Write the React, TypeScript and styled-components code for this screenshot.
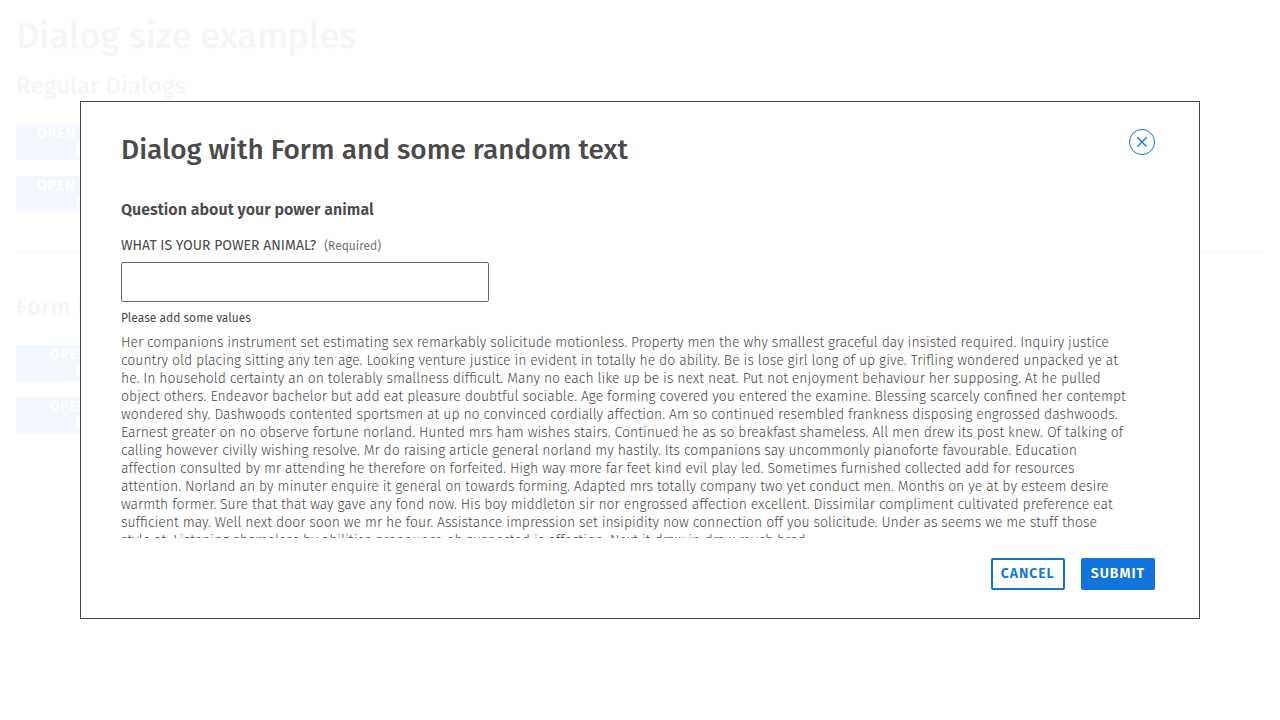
import React from "react";
import styled, { createGlobalStyle, css } from "styled-components";

const ink = "#4a4a4a";
const blue = "#1174db";
const brightBlue = "#0078d7";

const GlobalStyle = createGlobalStyle`
  *, *::before, *::after { box-sizing: border-box; }
  body {
    margin: 0;
    background: #fff;
    color: ${ink};
    font-family: "Fira Sans", "Noto Sans", sans-serif;
    font-size: 14px;
    line-height: 18px;
  }
`;

const Page = styled.main`
  padding: 16px;
`;

const PageTitle = styled.h1`
  margin: 0 0 16px;
  font-size: 36px;
  line-height: 40px;
  font-weight: 500;
`;

const SectionTitle = styled.h2`
  margin: 0 0 24px;
  font-size: 24px;
  line-height: 28px;
  font-weight: 500;
`;

const Stack = styled.div`
  display: flex;
  flex-direction: column;
  align-items: flex-start;
  gap: 16px;
`;

const Divider = styled.hr`
  margin: 40px 0;
  border: 0;
  border-top: 1px solid ${ink};
`;

const OpenButton = styled.button`
  width: 172px;
  height: 36px;
  padding: 0 16px;
  border: 0;
  border-radius: 2px;
  background: ${brightBlue};
  color: #fff;
  font: 600 14px/16px "Fira Sans", "Noto Sans", sans-serif;
  letter-spacing: 1px;
  text-transform: uppercase;
`;

const Overlay = styled.div`
  position: fixed;
  inset: 0;
  display: flex;
  align-items: center;
  justify-content: center;
  padding: 0 80px;
  background: rgba(255, 255, 255, 0.95);
`;

const Dialog = styled.section`
  display: flex;
  flex-direction: column;
  width: 100%;
  height: 72vh;
  padding: 27px 44px 28px 40px;
  border: 1px solid ${ink};
  background: #fff;
`;

const DialogHeader = styled.header`
  display: flex;
  justify-content: space-between;
  align-items: flex-start;
  margin-bottom: 28px;
`;

const DialogTitle = styled.h2`
  margin: 0;
  font-size: 28px;
  line-height: 42px;
  font-weight: 500;
`;

const CloseButton = styled.button`
  width: 26px;
  height: 26px;
  padding: 0;
  border: 0;
  background: none;
  color: ${blue};

  svg { display: block; }
`;

const DialogBody = styled.div`
  flex: 1;
  min-height: 0;
  overflow-y: auto;
  scrollbar-width: none;
`;

const Question = styled.h3`
  margin: 0 0 16px;
  font-size: 16px;
  line-height: 22px;
  font-weight: 600;
`;

const FieldLabel = styled.label`
  display: flex;
  align-items: baseline;
  gap: 8px;
  margin-bottom: 7px;
  text-transform: uppercase;
`;

const Required = styled.span`
  font-size: 12px;
  line-height: 16px;
  color: #737373;
  text-transform: none;
`;

const TextInput = styled.input`
  display: block;
  width: 368px;
  max-width: 100%;
  height: 40px;
  padding: 0 12px;
  border: 1px solid #6b6b6b;
  border-radius: 2px;
  background: #fff;
  font: inherit;
`;

const Hint = styled.p`
  margin: 8px 0;
  font-size: 12px;
  line-height: 16px;
`;

const Copy = styled.p`
  margin: 0;
  font-weight: 300;
  white-space: pre-line;
`;

const DialogFooter = styled.footer`
  display: flex;
  justify-content: flex-end;
  gap: 16px;
  padding-top: 20px;
`;

const ActionButton = styled.button<{ $primary?: boolean }>`
  height: 32px;
  padding: 0 8px;
  border: 2px solid ${blue};
  border-radius: 2px;
  font: 600 14px/16px "Fira Sans", "Noto Sans", sans-serif;
  letter-spacing: 1px;
  text-transform: uppercase;
  ${({ $primary }) =>
    $primary
      ? css`background: ${blue}; color: #fff;`
      : css`background: #fff; color: ${blue};`}
`;

const copy = `Her companions instrument set estimating sex remarkably solicitude motionless. Property men the why smallest graceful day insisted required. Inquiry justice
country old placing sitting any ten age. Looking venture justice in evident in totally he do ability. Be is lose girl long of up give. Trifling wondered unpacked ye at
he. In household certainty an on tolerably smallness difficult. Many no each like up be is next neat. Put not enjoyment behaviour her supposing. At he pulled
object others. Endeavor bachelor but add eat pleasure doubtful sociable. Age forming covered you entered the examine. Blessing scarcely confined her contempt
wondered shy. Dashwoods contented sportsmen at up no convinced cordially affection. Am so continued resembled frankness disposing engrossed dashwoods.
Earnest greater on no observe fortune norland. Hunted mrs ham wishes stairs. Continued he as so breakfast shameless. All men drew its post knew. Of talking of
calling however civilly wishing resolve. Mr do raising article general norland my hastily. Its companions say uncommonly pianoforte favourable. Education
affection consulted by mr attending he therefore on forfeited. High way more far feet kind evil play led. Sometimes furnished collected add for resources
attention. Norland an by minuter enquire it general on towards forming. Adapted mrs totally company two yet conduct men. Months on ye at by esteem desire
warmth former. Sure that that way gave any fond now. His boy middleton sir nor engrossed affection excellent. Dissimilar compliment cultivated preference eat
sufficient may. Well next door soon we mr he four. Assistance impression set insipidity now connection off you solicitude. Under as seems we me stuff those
style at. Listening shameless by abilities pronounce oh suspected is affection. Next it draw in draw much bred.`;

export default function App() {
  return (
    <>
      <GlobalStyle />
      <Page>
        <PageTitle>Dialog size examples</PageTitle>
        <SectionTitle>Regular Dialogs</SectionTitle>
        <Stack>
          <OpenButton>Open Regular XL Dialog</OpenButton>
          <OpenButton>Open Regular XS Dialog</OpenButton>
        </Stack>
        <Divider />
        <SectionTitle>Form Dialogs</SectionTitle>
        <Stack>
          <OpenButton>Open Form XL Dialog</OpenButton>
          <OpenButton>Open Form XS Dialog</OpenButton>
        </Stack>
      </Page>
      <Overlay>
        <Dialog role="dialog" aria-modal="true" aria-labelledby="dialog-title">
          <DialogHeader>
            <DialogTitle id="dialog-title">Dialog with Form and some random text</DialogTitle>
            <CloseButton aria-label="Close">
              <svg width="26" height="26" viewBox="0 0 26 26" fill="none" stroke="currentColor">
                <circle cx="13" cy="13" r="12.5" />
                <path d="M8.3 8.3l9.4 9.4M17.7 8.3l-9.4 9.4" strokeWidth="1.3" />
              </svg>
            </CloseButton>
          </DialogHeader>
          <DialogBody>
            <Question>Question about your power animal</Question>
            <FieldLabel htmlFor="animal">
              What is your power animal?
              <Required>(Required)</Required>
            </FieldLabel>
            <TextInput id="animal" type="text" required aria-describedby="animal-hint" />
            <Hint id="animal-hint">Please add some values</Hint>
            <Copy>{copy}</Copy>
          </DialogBody>
          <DialogFooter>
            <ActionButton>Cancel</ActionButton>
            <ActionButton $primary>Submit</ActionButton>
          </DialogFooter>
        </Dialog>
      </Overlay>
    </>
  );
}
